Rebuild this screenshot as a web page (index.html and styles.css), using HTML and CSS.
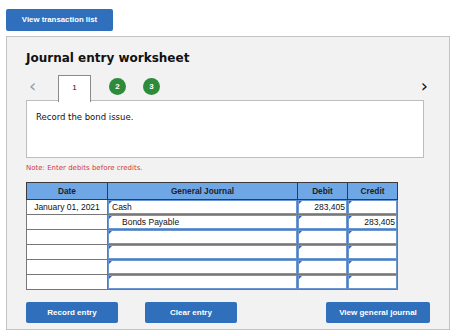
FILE: index.html
```html
<!DOCTYPE html>
<html>
<head>
<meta charset="utf-8">
<link rel="stylesheet" href="styles.css">
</head>
<body>
<div class="top">
  <button class="btn btn-top">View transaction list</button>
</div>
<div class="panel">
  <h1 class="title">Journal entry worksheet</h1>
  <div class="tabs">
    <span class="arrow arrow-left">&lsaquo;</span>
    <span class="tab tab-active">1</span>
    <span class="dot">2</span>
    <span class="dot">3</span>
    <span class="spacer"></span>
    <span class="arrow arrow-right">&rsaquo;</span>
  </div>
  <div class="desc">Record the bond issue.</div>
  <p class="note">Note: Enter debits before credits.</p>
  <table class="journal">
    <thead>
      <tr><th class="c-date">Date</th><th class="c-gj">General Journal</th><th class="c-num">Debit</th><th class="c-num">Credit</th></tr>
    </thead>
    <tbody>
      <tr><td class="date">January 01, 2021</td><td class="in"><div class="box">Cash</div></td><td class="in"><div class="box num">283,405</div></td><td class="in"><div class="box num"></div></td></tr>
      <tr><td class="date"></td><td class="in"><div class="box indent">Bonds Payable</div></td><td class="in"><div class="box num"></div></td><td class="in"><div class="box num">283,405</div></td></tr>
      <tr><td class="date"></td><td class="in"><div class="box"></div></td><td class="in"><div class="box"></div></td><td class="in"><div class="box"></div></td></tr>
      <tr><td class="date"></td><td class="in"><div class="box"></div></td><td class="in"><div class="box"></div></td><td class="in"><div class="box"></div></td></tr>
      <tr><td class="date"></td><td class="in"><div class="box"></div></td><td class="in"><div class="box"></div></td><td class="in"><div class="box"></div></td></tr>
      <tr><td class="date"></td><td class="in"><div class="box"></div></td><td class="in"><div class="box"></div></td><td class="in"><div class="box"></div></td></tr>
    </tbody>
  </table>
  <div class="actions">
    <button class="btn btn-rec">Record entry</button>
    <button class="btn btn-clear">Clear entry</button>
    <span class="spacer"></span>
    <button class="btn btn-view">View general journal</button>
  </div>
</div>
</body>
</html>
```
FILE: styles.css
```css
html, body {
  margin: 0;
  padding: 0;
  background: #ffffff;
  font-family: "Liberation Sans", Arial, sans-serif;
}
.top {
  padding: 8px 6px 6px 6px;
  height: 22px;
}
.btn {
  background: #2f6fbb;
  color: #ffffff;
  border: none;
  border-radius: 2px;
  font-family: "Liberation Sans", Arial, sans-serif;
  font-weight: bold;
  font-size: 8px;
  padding: 0;
  margin: 0;
  height: 21px;
}
.btn-top {
  width: 107px;
  height: 22px;
  font-size: 7.8px;
}
.panel {
  margin: 0 6px 0 6px;
  background: #f2f2f2;
  border: 1px solid #c3c3c3;
  padding: 0 0 0 19px;
  box-sizing: border-box;
  width: 444px;
  height: 294px;
}
.title {
  margin: 13px 0 0 0;
  font-family: "DejaVu Sans", Verdana, sans-serif;
  font-weight: bold;
  font-size: 12px;
  line-height: 16px;
  color: #111111;
}
.tabs {
  display: flex;
  align-items: center;
  height: 26px;
  margin-top: 8px;
  width: 404px;
  position: relative;
}
.arrow {
  font-size: 18px;
  line-height: 16px;
  font-family: "DejaVu Sans", sans-serif;
}
.arrow-left {
  color: #9a9a9a;
  margin-left: 3px;
  margin-top: -3px;
  width: 29px;
}
.arrow-right {
  color: #111111;
  margin-top: -3px;
  margin-right: 2px;
}
.tab {
  width: 33px;
  height: 27px;
  box-sizing: border-box;
  border: 1px solid #8a8a8a;
  border-bottom: none;
  background: #ffffff;
  font-size: 8px;
  text-align: center;
  line-height: 24px;
  color: #111;
  position: relative;
  z-index: 2;
  margin-bottom: -2px;
}
.dot {
  width: 17px;
  height: 17px;
  border-radius: 50%;
  background: #2e8b3c;
  color: #ffffff;
  font-size: 8px;
  font-weight: bold;
  text-align: center;
  line-height: 17px;
  margin-left: 18px;
  margin-top: -2px;
}
.dot + .dot {
  margin-left: 17px;
}
.spacer {
  flex: 1;
}
.desc {
  width: 398px;
  height: 58px;
  box-sizing: border-box;
  background: #ffffff;
  border: 1px solid #bdbdbd;
  padding: 11px 0 0 9px;
  font-family: "DejaVu Sans", Verdana, sans-serif;
  font-size: 8.5px;
  color: #111;
}
.note {
  margin: 5px 0 0 0;
  font-family: "DejaVu Sans", Verdana, sans-serif;
  font-size: 7px;
  color: #d03a3a;
  height: 10px;
  line-height: 10px;
}
.journal {
  margin-top: 9px;
  border-collapse: collapse;
  table-layout: fixed;
  width: 371px;
  font-size: 8.5px;
  color: #111;
}
.journal th {
  background: #6fa7e6;
  border: 1px solid #3a3a3a;
  height: 16px;
  padding: 0;
  font-weight: bold;
  font-size: 8.3px;
  color: #1e1e1e;
}
.c-date { width: 80px; }
.c-gj { width: 189px; }
.c-num { width: 49px; }
.journal td {
  height: 14px;
  padding: 0;
  border: 1px solid #777777;
  background: #ffffff;
}
.journal td.date {
  text-align: center;
}
.box {
  height: 14px;
  box-sizing: border-box;
  border: 1px solid #6b97d2;
  line-height: 12px;
  padding: 0 1px 0 3px;
  position: relative;
  white-space: nowrap;
}
.box::before {
  content: "";
  position: absolute;
  left: 0;
  top: 0;
  width: 0;
  height: 0;
  border-top: 3px solid #2a6ad0;
  border-right: 3px solid transparent;
}
.box.num {
  text-align: right;
}
.box.indent {
  padding-left: 13px;
}
.actions {
  display: flex;
  width: 404px;
  margin-top: 12px;
}
.btn-rec { width: 92px; }
.btn-clear { width: 92px; margin-left: 27px; }
.btn-view { width: 104px; }
```
